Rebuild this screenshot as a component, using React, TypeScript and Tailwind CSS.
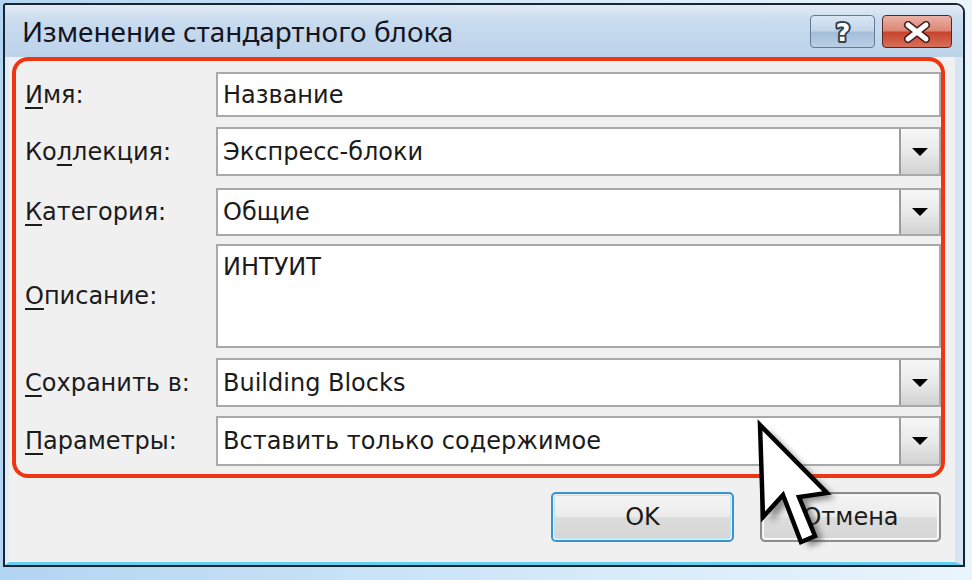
import React from "react";

const FONT = { fontFamily: '"Noto Sans", "DejaVu Sans", sans-serif' };
const BODYFONT = { fontFamily: '"DejaVu Sans", "Noto Sans", sans-serif' };

function Label({ pre, ch, post }: { pre: string; ch: string; post: string }) {
  return (
    <div className="w-[200px] shrink-0 pl-[9px] text-[24px] text-[#1b1b1b]">
      {pre}
      <span className="underline decoration-[2px] underline-offset-[4px]">{ch}</span>
      {post}
    </div>
  );
}

function Drop() {
  return (
    <div className="w-[40px] h-full flex items-center justify-center border-l-2 border-[#9c9c9c] bg-[linear-gradient(180deg,#f7f7f7_0%,#e9e9e9_50%,#d2d2d2_100%)]">
      <svg width="18" height="10" viewBox="0 0 18 10">
        <polygon points="1,1 17,1 9,9" fill="#000" />
      </svg>
    </div>
  );
}

export default function App() {
  return (
    <div
      className="relative w-[972px] h-[580px] overflow-hidden bg-[linear-gradient(90deg,#b2d5f2_0%,#d6eaf9_60%,#eaf4fc_100%)]"
      style={FONT}
    >
      <div className="ml-[3px] mt-[3px] w-[962px] h-[564px] border-2 border-[#18242f] rounded-tr-[9px] rounded-tl-[3px] flex flex-col overflow-hidden">
        {/* title bar */}
        <div className="h-[52px] shrink-0 flex items-start bg-[linear-gradient(180deg,#e2ebf5_0%,#c9dbee_30%,#bcd3ea_100%)]">
          <div className="pl-[17px] pt-[8px] text-[27.9px] leading-[36px] text-[#15151f]">
            Изменение стандартного блока
          </div>
          <div className="ml-auto mt-[10px] mr-[11px] flex gap-[7px]">
            <div className="w-[65px] h-[33px] rounded-[4px] border border-[#5f7c9b] bg-[linear-gradient(180deg,#d9e6f3_0%,#c3d6ea_48%,#a4bdd8_52%,#b9cfe6_100%)] flex items-center justify-center">
              <svg width="28" height="31" viewBox="0 0 28 31" className="overflow-visible">
                <text
                  x="14"
                  y="25"
                  textAnchor="middle"
                  fontSize="25"
                  fontWeight="700"
                  fontFamily="DejaVu Sans, sans-serif"
                  fill="#ffffff"
                  stroke="#34414f"
                  strokeWidth="4"
                  strokeLinejoin="round"
                  paintOrder="stroke"
                >
                  ?
                </text>
              </svg>
            </div>
            <div className="w-[70px] h-[33px] rounded-[4px] border border-[#5a2620] bg-[linear-gradient(180deg,#eab1a5_0%,#dc8674_48%,#c6432b_52%,#d8705a_100%)] flex items-center justify-center">
              <svg width="30" height="22" viewBox="0 0 30 22">
                <path d="M6 4 L24 18 M24 4 L6 18" stroke="#4a1f1a" strokeWidth="8" strokeLinecap="round" />
                <path d="M6 4 L24 18 M24 4 L6 18" stroke="#ffffff" strokeWidth="5" strokeLinecap="round" />
              </svg>
            </div>
          </div>
        </div>
        {/* body */}
        <div
          className="flex-1 flex flex-col bg-[#f0f0f0] border-l-[4px] border-l-[#e3ebf3] border-r-[8px] border-r-[#d8e6f3] border-b-[3px] border-b-[#62d0f0] pl-[3px] pr-[10px]"
          style={BODYFONT}
        >
          <div className="h-[421px] border-[4px] border-[#ee3712] rounded-[16px] flex flex-col pt-[11px] pb-[8px]">
            <div className="h-[45px] flex items-center">
              <Label pre="" ch="И" post="мя:" />
              <div className="flex-1 h-full border-2 border-[#a9a9a9] bg-white flex items-center pl-[5px] text-[24px] text-[#1b1b1b]">
                Название
              </div>
            </div>
            <div className="h-[49px] mt-[10px] flex items-center">
              <Label pre="Ко" ch="л" post="лекция:" />
              <div className="flex-1 h-full border-2 border-[#a9a9a9] bg-white flex items-center text-[24px] text-[#1b1b1b]">
                <div className="flex-1 pl-[5px]">Экспресс-блоки</div>
                <Drop />
              </div>
            </div>
            <div className="h-[48px] mt-[12px] flex items-center">
              <Label pre="" ch="К" post="атегория:" />
              <div className="flex-1 h-full border-2 border-[#a9a9a9] bg-white flex items-center text-[24px] text-[#1b1b1b]">
                <div className="flex-1 pl-[5px]">Общие</div>
                <Drop />
              </div>
            </div>
            <div className="h-[104px] mt-[8px] flex items-center">
              <Label pre="" ch="О" post="писание:" />
              <div className="flex-1 h-full border-2 border-[#a9a9a9] bg-white pl-[5px] pt-[6px] text-[24px] leading-[30px] text-[#1b1b1b]">
                ИНТУИТ
              </div>
            </div>
            <div className="h-[49px] mt-[10px] flex items-center">
              <Label pre="" ch="С" post="охранить в:" />
              <div className="flex-1 h-full border-2 border-[#a9a9a9] bg-white flex items-center text-[24px] text-[#1b1b1b]">
                <div className="flex-1 pl-[5px]">Building Blocks</div>
                <Drop />
              </div>
            </div>
            <div className="h-[50px] mt-[9px] flex items-center">
              <Label pre="" ch="П" post="араметры:" />
              <div className="flex-1 h-full border-2 border-[#a9a9a9] bg-white flex items-center text-[24px] text-[#1b1b1b]">
                <div className="flex-1 pl-[5px]">Вставить только содержимое</div>
                <Drop />
              </div>
            </div>
          </div>
          <div className="mt-[14px] flex justify-end gap-[26px] pr-[4px]">
            <div className="w-[183px] h-[50px] rounded-[5px] border-2 border-[#3a93cc] p-[1px]">
              <div className="w-full h-full rounded-[3px] border border-[#bfe6f8] bg-[linear-gradient(180deg,#f4f4f4_0%,#ececec_48%,#dcdcdc_52%,#d6d6d6_100%)] flex items-center justify-center text-[24px] text-[#1b1b1b]">
                OK
              </div>
            </div>
            <div className="w-[181px] h-[50px] rounded-[5px] border-2 border-[#8c8c8c] p-[1px]">
              <div className="w-full h-full rounded-[3px] border border-[#fafafa] bg-[linear-gradient(180deg,#f4f4f4_0%,#ececec_48%,#dcdcdc_52%,#d6d6d6_100%)] flex items-center justify-center text-[24px] text-[#1b1b1b]">
                Отмена
              </div>
            </div>
          </div>
        </div>
      </div>
      {/* mouse cursor */}
      <svg className="absolute left-0 top-0 pointer-events-none" width="972" height="580" viewBox="0 0 972 580">
        <defs>
          <filter id="blur" x="-20%" y="-20%" width="140%" height="140%">
            <feGaussianBlur stdDeviation="3" />
          </filter>
        </defs>
        <polygon
          points="768,430 771,522 791,500 809,547 823,541 807,502 835,498"
          fill="#444"
          opacity="0.6"
          filter="url(#blur)"
        />
        <polygon
          points="760,425 763,517 783,495 801,542 815,536 799,497 827,493"
          fill="#fff"
          stroke="#000"
          strokeWidth="4.5"
          strokeLinejoin="miter"
        />
      </svg>
    </div>
  );
}
